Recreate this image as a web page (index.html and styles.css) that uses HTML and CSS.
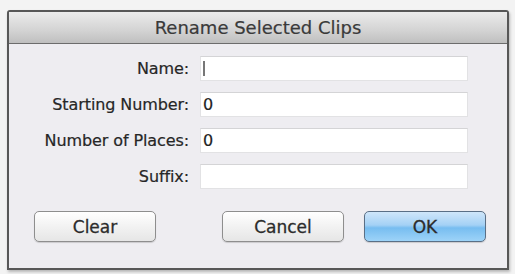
FILE: index.html
```html
<!DOCTYPE html>
<html lang="en">
<head>
    <meta charset="UTF-8">
    <title>Rename Selected Clips</title>
    <link rel="stylesheet" href="styles.css">
</head>
<body>
    <div class="dialog">
        <div class="titlebar">Rename Selected Clips</div>
        <div class="content">
            <div class="form">
                <label class="label">Name:</label>
                <div class="field"><span class="caret"></span></div>
                <label class="label">Starting Number:</label>
                <div class="field">0</div>
                <label class="label">Number of Places:</label>
                <div class="field">0</div>
                <label class="label">Suffix:</label>
                <div class="field"></div>
            </div>
            <div class="buttons">
                <button class="btn">Clear</button>
                <div class="spacer"></div>
                <button class="btn">Cancel</button>
                <button class="btn default">OK</button>
            </div>
        </div>
    </div>
</body>
</html>
```

FILE: styles.css
```css
* {
    margin: 0;
    padding: 0;
    box-sizing: border-box;
}

body {
    font-family: "DejaVu Sans", "Liberation Sans", sans-serif;
    background: #f3f3f3;
    height: 274px;
    overflow: hidden;
    padding: 10px 0 0 7px;
}

.dialog {
    width: 502px;
    height: 260px;
    border: 2px solid #575757;
    border-radius: 3px 3px 0 0;
    background: #eeedf1;
    box-shadow: 1px 2px 3px rgba(0,0,0,0.25);
    display: flex;
    flex-direction: column;
}

.titlebar {
    height: 32px;
    background: linear-gradient(#ebebeb, #d3d3d3 60%, #bfbfbf);
    border-bottom: 1px solid #6c6c6c;
    text-align: center;
    line-height: 31px;
    font-size: 18px;
    color: #3a3a3a;
    -webkit-text-stroke: 0.2px #3a3a3a;
}

.content {
    flex: 1;
    padding: 12px 21px 0 23px;
}

.form {
    display: grid;
    grid-template-columns: 157px 268px;
    column-gap: 11px;
    row-gap: 11px;
    align-items: center;
}

.label {
    text-align: right;
    font-size: 16px;
    letter-spacing: -0.1px;
    color: #262626;
    -webkit-text-stroke: 0.2px #262626;
}

.field {
    height: 25px;
    background: #fff;
    border: 1px solid #e2e2e4;
    border-top-color: #d4d4d6;
    font-size: 16px;
    line-height: 23px;
    padding-left: 2px;
    color: #222;
    -webkit-text-stroke: 0.2px #222;
}

.caret {
    display: inline-block;
    width: 2px;
    height: 15px;
    background: #777;
    vertical-align: -2px;
}

.buttons {
    display: flex;
    gap: 20px;
    margin-top: 22px;
    padding-left: 2px;
}

.spacer {
    flex: 1;
}

.btn {
    width: 122px;
    height: 31px;
    border: 1px solid #8e8e8e;
    border-radius: 5px;
    background: linear-gradient(#ffffff, #f2f2f2 50%, #e6e6e6);
    font-family: inherit;
    font-size: 17px;
    color: #2c2c2c;
    -webkit-text-stroke: 0.3px #2c2c2c;
    box-shadow: 0 1px 1px rgba(0,0,0,0.15);
}

.btn.default {
    border-color: #5a6f86;
    background: linear-gradient(#cfe6fa, #a4d1f5 45%, #77bdf0 55%, #9dd3f8);
}
```
